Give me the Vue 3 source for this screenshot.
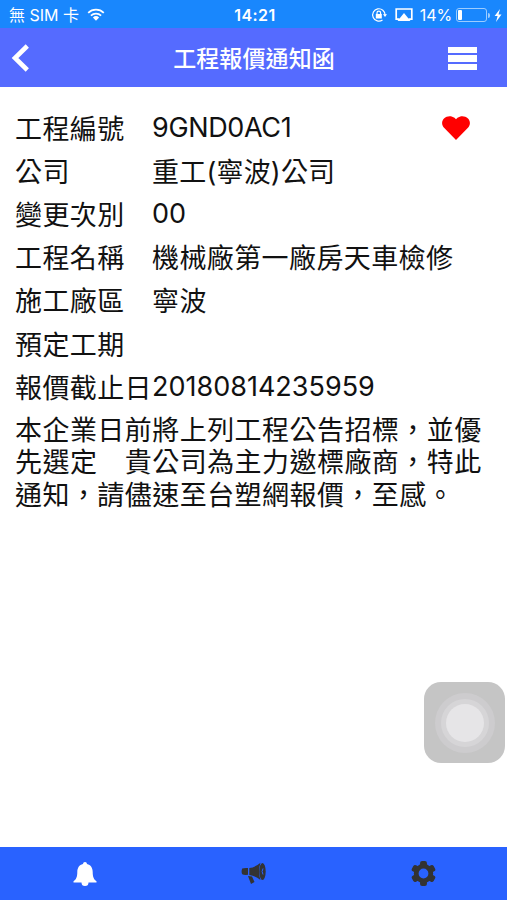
<template>
  <div class="phone">
    <div class="status-bar">
      <div class="status-left">
        <span class="carrier">無 SIM 卡</span>
        <svg class="wifi" viewBox="0 0 18 13">
          <path d="M1.2 4.8a11.3 11.3 0 0 1 15.6 0M3.9 7.7a7.4 7.4 0 0 1 10.2 0" />
          <path class="solid" d="M5.9 9.5a4.6 4.6 0 0 1 6.2 0L9 12.8z" />
        </svg>
      </div>
      <span class="time">14:21</span>
      <div class="status-right">
        <svg class="lock" viewBox="0 0 16 16">
          <path d="M11.5 13A6.2 6.2 0 1 1 14.1 8" />
          <path d="M6 7.5V6a1.8 1.8 0 0 1 3.6 0v1.5" />
          <path class="solid" d="M4.8 7h6v4.500h-6zM12 7.2h4l-2 2.8z" />
        </svg>
        <svg class="airplay" viewBox="0 0 18 14">
          <path d="M4.5 11.2H1.2V1h15.6v10.2h-3.3" />
          <path class="solid" d="M9 5l6.5 8h-13z" />
        </svg>
        <span class="percent">14%</span>
        <div class="battery">
          <div class="level" :style="{ width: battery + '%' }"></div>
        </div>
        <span class="battery-tip"></span>
        <svg class="bolt" viewBox="0 0 8 13">
          <path d="M6 0L0.6 7h3L2 13l5.5-7.5h-3z" />
        </svg>
      </div>
    </div>

    <header class="nav-bar">
      <svg class="back" viewBox="0 0 20 30">
        <path d="M16.3 3L4 15l12.3 12" />
      </svg>
      <h1>工程報價通知函</h1>
      <div class="menu"><i></i><i></i><i></i></div>
    </header>

    <main>
      <div v-for="row in rows" :key="row.label" class="row">
        <span class="label">{{ row.label }}</span>
        <span class="value" :class="row.type">{{ row.value }}</span>
        <svg v-if="row.liked" class="heart" viewBox="0 0 28 24">
          <path d="M14 24L1.8 11.500C-.5 9-.5 5 2 2.500 5-.5 9.500-.5 12.500 1.800L14 3.200l1.500-1.400C18.500-.5 23-.5 26 2.500c2.500 2.500 2.500 6.500.2 9z" />
        </svg>
      </div>
      <p>
        <span v-for="line in message" :key="line">{{ line }}</span>
      </p>
    </main>

    <div class="assistive"><i></i></div>

    <footer class="tab-bar">
      <div class="tab">
        <svg class="bell" viewBox="0 0 24 24">
          <path d="M12 0c1.2 0 1.9.8 2 2 3.8.9 5.700 4 5.700 8 0 5 1.200 7.500 3.800 9.300v1.200H15.500a3.500 3.500 0 0 1-7 0H.5v-1.200C3.100 17.500 4.300 15 4.300 10c0-4 1.900-7.100 5.700-8 .1-1.200.8-2 2-2z" />
        </svg>
      </div>
      <div class="tab">
        <svg class="horn" viewBox="0 0 26 23">
          <path d="M1.2 6.5Q3 5.7 7 6v6.8q-4 .5-5.800-.6Q0 9.500 1.200 6.500zM8.300 6Q14 5.500 19.500.8q-3 8.600 0 17.200Q14 13.700 8.300 12.900zM7 14l4 .5 2.500 5.500-3.500 2z" />
          <ellipse cx="21.5" cy="9.5" rx="3.2" ry="8.6" />
          <path class="ridge" d="M22 6.500q-1.800 3 0 6" />
        </svg>
      </div>
      <div class="tab">
        <svg class="gear" viewBox="0 0 24 24">
          <rect v-for="a in 6" :key="a" x="8.7" y="0" width="6.6" height="7" rx="2" :transform="`rotate(${a * 60} 12 12)`" />
          <circle cx="12" cy="12" r="7" />
        </svg>
      </div>
    </footer>
  </div>
</template>

<script setup>
const battery = 14

const rows = [
  { label: '工程編號', value: '9GND0AC1', type: 'code', liked: true },
  { label: '公司', value: '重工(寧波)公司', type: 'company' },
  { label: '變更次別', value: '00', type: 'digits' },
  { label: '工程名稱', value: '機械廠第一廠房天車檢修' },
  { label: '施工廠區', value: '寧波' },
  { label: '預定工期', value: '' },
  { label: '報價截止日', value: '20180814235959', type: 'digits' },
]

const message = [
  '本企業日前將上列工程公告招標，並優',
  '先選定　貴公司為主力邀標廠商，特此',
  '通知，請儘速至台塑網報價，至感。',
]
</script>

<style>
body {
  margin: 0;
  background: #fff;
}
</style>

<style scoped>
.phone {
  position: relative;
  display: flex;
  flex-direction: column;
  width: 507px;
  height: 900px;
  overflow: hidden;
  background: #fff;
  color: #111;
  font-family: Inter, 'Noto Sans CJK TC', sans-serif;
}

svg {
  display: block;
  flex: none;
}

.status-bar {
  display: grid;
  grid-template-columns: 1fr auto 1fr;
  align-items: center;
  flex: none;
  height: 28px;
  padding: 2px 5px 0 9px;
  box-sizing: border-box;
  background: #1987fd;
  color: #fff;
  font-size: 16px;
  line-height: 26px;
  white-space: nowrap;
}

.status-left,
.status-right {
  display: flex;
  align-items: center;
}

.status-right {
  justify-content: flex-end;
}

.status-bar svg path {
  fill: none;
  stroke: #fff;
  stroke-width: 1.7;
}

.status-bar svg .solid,
.status-bar .bolt path {
  fill: #fff;
  stroke: none;
}

.wifi {
  width: 18px;
  height: 13px;
  margin: -2px 0 0 8px;
}

.time {
  margin-left: -1px;
  font-weight: 600;
  letter-spacing: 0.4px;
}

.lock {
  width: 16px;
  height: 16px;
  margin-right: 8px;
}

.status-bar .lock path {
  stroke-width: 1.2;
}

.airplay {
  width: 18px;
  height: 14px;
  margin-right: 7px;
}

.percent {
  letter-spacing: -0.1px;
}

.battery {
  width: 31px;
  height: 14px;
  margin-left: 4px;
  padding: 1px;
  box-sizing: border-box;
  border: 1px solid #9cccff;
  border-radius: 3px;
}

.level {
  height: 100%;
  border-radius: 1px;
  background: #fff;
}

.battery-tip {
  width: 2px;
  height: 5px;
  margin: 0 4px 0 1px;
  border-radius: 0 2px 2px 0;
  background: #9cccff;
}

.bolt {
  width: 8px;
  height: 13px;
}

.nav-bar {
  display: grid;
  grid-template-columns: 1fr auto 1fr;
  align-items: center;
  flex: none;
  height: 59px;
  padding: 0 30px 0 11px;
  box-sizing: border-box;
  background: #556bff;
  color: #fff;
}

.back {
  width: 20px;
  height: 30px;
}

.back path {
  fill: none;
  stroke: #fff;
  stroke-width: 4.6;
}

h1 {
  margin: 3px -10px 0 10px;
  font-size: 23px;
  font-weight: 500;
  line-height: 56px;
  letter-spacing: 0.1px;
}

.menu {
  display: flex;
  flex-direction: column;
  gap: 2px;
  justify-self: end;
  margin-top: 2px;
}

.menu i {
  width: 29px;
  height: 6.5px;
  background: #fff;
}

main {
  flex: 1;
  padding: 19px 14px 0 15px;
}

.row {
  display: flex;
  align-items: center;
  height: 43.1px;
  font-size: 27px;
  letter-spacing: 0.4px;
  white-space: nowrap;
}

.label {
  flex: none;
  width: 137px;
}

.value {
  flex: 1;
}

.code {
  letter-spacing: -0.35px;
}

.company {
  letter-spacing: 0.2px;
}

.digits {
  letter-spacing: 0;
}

.heart {
  width: 28px;
  height: 24px;
  margin-right: 23px;
  fill: #f00;
}

p {
  margin: 7px 0 0;
  font-size: 27px;
  line-height: 32.5px;
  letter-spacing: 0.45px;
  white-space: nowrap;
}

p span {
  display: block;
}

/* floating AssistiveTouch button */
.assistive {
  position: absolute;
  top: 682px;
  left: 424px;
  display: flex;
  align-items: center;
  justify-content: center;
  width: 81px;
  height: 81px;
  border-radius: 17px;
  background: #c5c5c5;
}

.assistive i {
  width: 38px;
  height: 38px;
  border-radius: 50%;
  background: #e6e5e7;
  box-shadow: 0 0 0 5px #d6d5d7, 0 0 0 11px #cdccce;
}

.tab-bar {
  display: grid;
  grid-template-columns: repeat(3, 1fr);
  align-items: center;
  flex: none;
  height: 53px;
  background: #2962ff;
}

.tab {
  display: flex;
  justify-content: center;
  padding-left: 1px;
}

.bell {
  width: 24px;
  height: 24px;
  fill: #fff;
}

.horn {
  width: 26px;
  height: 23px;
  fill: #333;
}

.ridge {
  fill: none;
  stroke: #2962ff;
  stroke-width: 1;
}

.gear {
  width: 25px;
  height: 25px;
  fill: #333;
}

.gear circle {
  fill: #2962ff;
  stroke: #333;
  stroke-width: 4.6;
}
</style>
